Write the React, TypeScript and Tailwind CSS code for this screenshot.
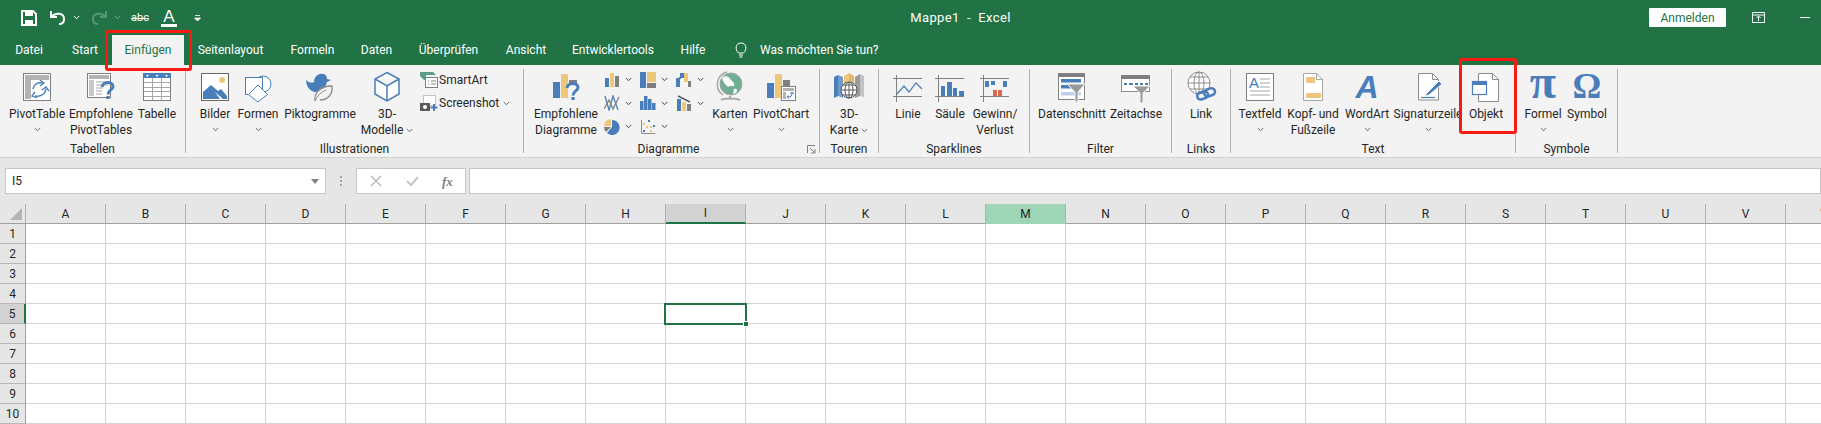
import React from 'react';

const B = '#4a7ebb', G = '#edc77c', K = '#7f7f7f', L = '#a6a6a6';

function Big({ children }: { children: React.ReactNode }) {
  return <svg width="32" height="34" viewBox="0 0 32 34" fill="none">{children}</svg>;
}
function Small({ children }: { children: React.ReactNode }) {
  return <svg width="18" height="18" viewBox="0 0 18 18" fill="none" className="shrink-0">{children}</svg>;
}
function Mini({ children }: { children: React.ReactNode }) {
  return <svg width="16" height="16" viewBox="0 0 16 16" fill="none" className="shrink-0">{children}</svg>;
}
function Chev({ color = '#666' }: { color?: string }) {
  return <svg width="7" height="5" viewBox="0 0 7 5" className="inline-block shrink-0"><path d="M.8 1 3.5 3.7 6.2 1" stroke={color} fill="none" /></svg>;
}
const Q = ({ x = 0, y = 0 }: { x?: number; y?: number }) => (
  <g transform={`translate(${x} ${y})`}>
    <path d="M0 5C.5-.8 11-.8 11 4.5c0 3.5-5 3.5-5 8" stroke={B} strokeWidth="3" />
    <rect x="4.4" y="14" width="3.2" height="3" fill={B} />
  </g>
);

const IPivot = () => <Big>
  <rect x="2.5" y="3.5" width="27" height="27" fill="#fff" stroke={K} />
  <path d="M4 5h24v5H10v19H4z" fill="#b3b3b3" />
  <path d="M14 26c6 1 10-2 11-7M22 13c-5-1-9 1-10 6" stroke={B} strokeWidth="1.5" />
  <path d="M21 20l4-3 3 4M14 22l-3 4 5 2M19 10l4 3-4 3" stroke={B} strokeWidth="1.3" />
</Big>;
const IEmpf = () => <Big>
  <rect x="2.5" y="3.5" width="23" height="24" fill="#fff" stroke={K} />
  <path d="M4 5h20v4H4z" fill="#b3b3b3" /><path d="M4 10h5v16H4z" fill="#c8c8c8" />
  <path d="M11 12h12M11 15h12M11 18h7M11 21h6M11 24h6" stroke={L} />
  <Q x={17} y={12} />
</Big>;
const ITable = () => <Big>
  <rect x="2.5" y="3.5" width="27" height="27" fill="#fff" stroke={K} />
  <rect x="2" y="3" width="28" height="5" fill={B} />
  <path d="M5 5h3l-1.5 2zM14.5 5h3L16 7zM24 5h3l-1.5 2z" fill="#fff" />
  <path d="M3 12.500h26M3 17.500h26M3 21.500h26M3 26.500h26M11.500 8v22M20.500 8v22" stroke={L} />
</Big>;
const IBilder = () => <Big>
  <rect x="2.500" y="3.500" width="27" height="27" fill="#fff" stroke="#666" />
  <circle cx="23" cy="10" r="3" fill={G} />
  <path d="M4 29v-7l8-7 7 6 3-2 6 7v3h-4l-8-7 5 7z" fill={B} />
</Big>;
const IFormen = () => <Big>
  <circle cx="21" cy="14" r="8" fill="#fff" stroke={B} />
  <rect x="3.500" y="7.500" width="17" height="17" fill="#fff" stroke={B} />
  <path d="M16 15l9.500 9.500L16 32l-9.500-7.500z" fill="#fff" stroke={B} />
</Big>;
const IPikto = () => <Big>
  <path d="M2 10c3 3 6 3 8 2 0-5 4-9 9-8 3 0 4 3 4 5l4 1-4 2c-1 5-5 10-11 10C6 22 2 16 2 10z" fill={B} />
  <path d="M11 31c-1-7 4-15 17-15 1 8-4 14-12 14" fill="#f3f3f3" stroke="#8c8c8c" strokeWidth="1.300" />
  <path d="M11 31c2-5 6-9 11-11" stroke="#8c8c8c" />
</Big>;
const ICube = () => <Big>
  <path d="M16 2.500l12 6.500v15l-12 7-12-7V9zM4 9l12 7 12-7M16 16v15" stroke={B} strokeWidth="1.500" fill="#fff" />
</Big>;
const IEmpDia = () => <Big>
  <rect x="3" y="12" width="7" height="16" fill={B} />
  <rect x="11" y="4" width="7" height="24" fill={G} />
  <rect x="19" y="10" width="8" height="3" fill={K} />
  <Q x={17} y={13} />
</Big>;
const IGlobe = () => <Big>
  <path d="M13 2c-11 3-13 17-4 23" stroke={L} strokeWidth="1.500" />
  <circle cx="17" cy="14" r="11" fill="#6fae93" stroke={L} />
  <path d="M8 8c3-3 7-2 8 1 3 3 5 4 4 7-2 1-4-2-5 1-3-1-6-5-7-9zM20 19c3-1 4 1 2 4l-3 1z" fill="#fff" />
  <path d="M16 26v3M7 30c3-2 15-2 19 0" stroke={L} strokeWidth="2" />
</Big>;
const IPChart = () => <Big>
  <rect x="2" y="13" width="7" height="15" fill={B} />
  <rect x="10" y="4" width="7" height="24" fill={G} />
  <rect x="18" y="10" width="7" height="18" fill={K} />
  <rect x="16.500" y="16.500" width="14" height="14" fill="#fff" stroke="#808080" />
  <path d="M18 18h11v3H18zM18 22h3v7h-3z" fill="#b3b3b3" />
  <path d="M23 27c3 0 4-1 4-4" stroke={B} /><path d="M25 24l2-2 2 2M24 25.500l-2 1.500 2 1.500" stroke={B} />
</Big>;
const IMap3D = () => <Big>
  <path d="M1 7l4-2v21l-4 2z" fill={B} /><path d="M5 5l5 2v21l-5-2z" fill="#6f9bcb" />
  <path d="M11 6l5-3v8l-5 3z" fill={G} /><path d="M16 3l5 3v8l-5-3z" fill="#e3b766" />
  <path d="M22 7l5-3v22l-5 2z" fill="#9a9a9a" /><path d="M27 4l4 2v21l-4-1z" fill="#c2c2c2" />
  <circle cx="16" cy="20" r="8" fill="#fff" stroke="#595959" />
  <path d="M8 20h16M16 12v16M10 15h12M10 25h12" stroke="#595959" /><ellipse cx="16" cy="20" rx="4" ry="8" stroke="#595959" />
</Big>;
const SparkFrame = () => <path d="M1 8.500h29M1 26.500h29M4.500 5v27" stroke={K} />;
const ILinie = () => <Big><SparkFrame /><path d="M5 24l7-8 5 6 7-9 6 6" stroke={B} strokeWidth="1.200" /></Big>;
const ISaeule = () => <Big><SparkFrame /><path d="M7 16h4v10H7zM13 12h5v14h-5zM19 18h4v8h-4zM25 21h5v5h-5z" fill={B} /></Big>;
const IGewinn = () => <Big>
  <SparkFrame /><path d="M6 11h4v6H6zM12 11h4v4h-4zM24 11h4v6h-4z" fill={B} /><path d="M14 20h4v6h-4zM19 20h4v6h-4z" fill="#d9694f" />
</Big>;
const ISlicer = () => <Big>
  <rect x="2.500" y="3.500" width="26" height="26" fill="#fff" stroke="#808080" />
  <rect x="3" y="4" width="25" height="3" fill="#7f7f7f" />
  <rect x="5" y="9" width="20" height="3.500" fill={B} /><rect x="5" y="15" width="20" height="3.500" fill={B} /><rect x="5" y="22" width="20" height="3.500" fill="#bdd0e8" />
  <path d="M11 14h18l-7 8v10h-3V22z" fill="#9a9a9a" stroke="#f3f3f3" />
</Big>;
const ITimeline = () => <Big>
  <rect x="1.500" y="5.500" width="28" height="16" fill="#fff" stroke="#8c8c8c" />
  <rect x="1" y="5" width="29" height="4" fill="#7f7f7f" />
  <path d="M4 13h3v2H4zM9 13h4v2H9zM15 13h3v2h-3zM20 13h3v2h-3zM25 13h3v2h-3z" fill={B} />
  <path d="M13 16h17l-7 7v10h-3V23z" fill="#9a9a9a" stroke="#f3f3f3" />
</Big>;
const ILink = () => <Big>
  <circle cx="14" cy="13" r="11" fill="#fff" stroke="#8c8c8c" />
  <ellipse cx="14" cy="13" rx="5" ry="11" stroke="#8c8c8c" /><path d="M3 13h22M5 7h18M5 19h18M14 2v22" stroke="#8c8c8c" />
  <rect x="12" y="22" width="11" height="7" rx="3.500" transform="rotate(-18 17 25)" stroke={B} strokeWidth="2.500" />
  <rect x="19" y="19" width="11" height="7" rx="3.500" transform="rotate(-18 24 22)" stroke={B} strokeWidth="2.500" />
</Big>;
const ITextfeld = () => <Big>
  <rect x="2.500" y="3.500" width="27" height="27" fill="#fff" stroke="#808080" />
  <text x="5" y="18" fill={B} fontSize="15" fontFamily="'Liberation Sans',sans-serif">A</text>
  <path d="M16 9h10M16 13h10M16 17h10M6 21h20M6 25h20" stroke={L} />
</Big>;
const IKopf = () => <Big>
  <path d="M6.500 3.500h13l6 6v21h-19z" fill="#fff" stroke="#a6a6a6" /><path d="M19.500 3.500v6h6" stroke="#a6a6a6" />
  <rect x="9" y="7" width="9" height="6" fill={G} /><rect x="9" y="23" width="15" height="5" fill={G} />
</Big>;
const IWordArt = () => <svg width="32" height="34" viewBox="0 0 32 34" className="overflow-visible">
  <text x="16" y="28" textAnchor="middle" fill={B} fontSize="32" fontWeight="700" fontStyle="italic" fontFamily="'Liberation Sans',sans-serif">A</text>
</svg>;
const ISign = () => <Big>
  <path d="M6.500 3.500h14l6 6v20.500h-20z" fill="#fff" stroke="#8c8c8c" /><path d="M20.500 3.500v6h6" stroke="#8c8c8c" />
  <path d="M9 27.500h14" stroke={B} strokeWidth="1.200" /><path d="M14 24l13-13 3 3-13 11-4 1z" fill={B} stroke="#f3f3f3" />
</Big>;
const IObjekt = () => <Big>
  <path d="M8.500 3.500h14l6 6v22h-20z" fill="#fff" stroke="#8c8c8c" /><path d="M22.500 3.500v6h6" stroke="#8c8c8c" />
  <rect x="2.500" y="11.500" width="14" height="13" fill="#fff" stroke={B} strokeWidth="1.200" /><rect x="2" y="11" width="15" height="4" fill={B} />
</Big>;
const Glyph = ({ c, s }: { c: string; s: number }) => <svg width="32" height="34" viewBox="0 0 32 34" className="overflow-visible">
  <text x="16" y="28" textAnchor="middle" fill={B} fontSize={s} fontWeight="700" fontFamily="'Liberation Serif',serif">{c}</text>
</svg>;

type Tool = { w: number; lines: string[]; chev?: 'below' | 'inline'; icon: React.ReactNode };

function ToolBtn({ t }: { t: Tool }) {
  return (
    <div className="flex h-[72px] shrink-0 flex-col items-center" style={{ width: t.w }}>
      <div className="h-[37px] pt-[1px]">{t.icon}</div>
      {t.lines.map((l, i) => (
        <div key={i} className="flex h-[16px] items-center gap-[3px] whitespace-nowrap leading-[16px]">
          {l}{t.chev === 'inline' && i === t.lines.length - 1 && <Chev />}
        </div>
      ))}
      {t.chev === 'below' && <div className="flex h-[14px] items-center"><Chev /></div>}
    </div>
  );
}

function Group({ w, pl, label, labelMl, children }: { w: number; pl: number; label: string; labelMl?: number; children: React.ReactNode }) {
  return (
    <div className="relative flex h-[84px] shrink-0 flex-col border-r border-[#b0b0b0]" style={{ width: w }}>
      <div className="flex h-[72px]" style={{ paddingLeft: pl }}>{children}</div>
      <div className="h-[12px] text-center leading-[16px]" style={{ marginLeft: labelMl ?? 0 }}>{label}</div>
    </div>
  );
}

const miniGrid: React.ReactNode[] = [
  <Mini><rect x="1" y="6" width="4" height="9" fill={B} /><rect x="6" y="1" width="4" height="14" fill={G} /><rect x="11" y="4" width="4" height="11" fill={K} /></Mini>,
  <Mini><rect x="0" y="0" width="6" height="16" fill={B} /><rect x="7" y="0" width="9" height="10" fill={G} /><rect x="7" y="11" width="9" height="5" fill={K} /></Mini>,
  <Mini><path d="M0 6h4v9H0zM4 1h4v5H4zM3 5h2v2H3z" fill={B} /><rect x="8" y="1" width="4" height="9" fill={G} /><rect x="12" y="9" width="3" height="6" fill={K} /></Mini>,
  <Mini><path d="M1 1l4 14 4-14 5 14" stroke={B} strokeWidth="1.300" /><path d="M0 14l5-9 4 9 6-12" stroke={K} strokeWidth="1.300" /></Mini>,
  <Mini><rect x="0" y="6" width="3.500" height="9" fill={B} /><rect x="4" y="1" width="3.500" height="14" fill={B} /><rect x="8" y="4" width="3.500" height="11" fill={B} /><rect x="12" y="8" width="3.500" height="7" fill={B} /></Mini>,
  <Mini><rect x="1" y="4" width="4" height="12" fill={B} /><rect x="6" y="7" width="4" height="9" fill={G} /><rect x="11" y="9" width="4" height="7" fill={K} /><path d="M2 1l6 3 6 3" stroke="#595959" strokeWidth="1.500" /></Mini>,
  <Mini><path d="M8 8V1a7.500 7.500 0 1 1-5 13z" fill={B} /><path d="M7 7V0a7 7 0 0 0-7 7z" fill={G} /><path d="M7 8H0a7 7 0 0 0 2 5z" fill={K} /></Mini>,
  <Mini><path d="M1.500 1v13.500H15" stroke="#8c8c8c" /><rect x="3" y="4" width="2" height="2" fill={G} /><rect x="8" y="1" width="2" height="2" fill={B} /><rect x="6" y="7" width="2" height="2" fill={G} /><rect x="3" y="11" width="2" height="2" fill={B} /><rect x="10" y="7" width="2" height="2" fill={G} /><rect x="13" y="6" width="2" height="2" fill={B} /><rect x="10" y="11" width="2" height="2" fill={G} /></Mini>,
];

function Ribbon() {
  return (
    <div className="flex h-[93px] border-b border-[#d2d2d2] bg-[#f3f3f3] pt-[4px] text-[12px] text-[#262626]">
      <Group w={186} pl={5} label="Tabellen">
        <ToolBtn t={{ w: 64, lines: ['PivotTable'], chev: 'below', icon: <IPivot /> }} />
        <ToolBtn t={{ w: 64, lines: ['Empfohlene', 'PivotTables'], icon: <IEmpf /> }} />
        <ToolBtn t={{ w: 48, lines: ['Tabelle'], icon: <ITable /> }} />
      </Group>
      <Group w={338} pl={8} label="Illustrationen">
        <ToolBtn t={{ w: 42, lines: ['Bilder'], chev: 'below', icon: <IBilder /> }} />
        <ToolBtn t={{ w: 44, lines: ['Formen'], chev: 'below', icon: <IFormen /> }} />
        <ToolBtn t={{ w: 80, lines: ['Piktogramme'], icon: <IPikto /> }} />
        <ToolBtn t={{ w: 54, lines: ['3D-', 'Modelle'], chev: 'inline', icon: <ICube /> }} />
        <div className="ml-[6px] flex flex-col gap-[3px] pt-[1px]">
          <div className="flex h-[20px] items-center gap-[1px]">
            <Small><path d="M0 1h13l3 3H6v5H4L0 5z" fill="#5d9d83" /><rect x="5.500" y="6.500" width="12" height="10" fill="#fff" stroke="#7f7f7f" /><path d="M8 10h1M11 10h5M8 13h1M11 13h5" stroke="#7f7f7f" /></Small>
            SmartArt
          </div>
          <div className="flex h-[20px] items-center gap-[1px]">
            <Small><rect x="3.500" y="1.500" width="12" height="10" fill="#fff" stroke="#8c8c8c" strokeDasharray="1 1" /><rect x="0" y="9" width="10" height="8" fill="#595959" /><circle cx="5" cy="13" r="2" fill="#fff" /><path d="M14 10v7M10.500 13.500h7" stroke={B} strokeWidth="2" /></Small>
            Screenshot<span className="ml-[3px]"><Chev /></span>
          </div>
        </div>
      </Group>
      <Group w={296} pl={10} label="Diagramme" labelMl={-6}>
        <ToolBtn t={{ w: 64, lines: ['Empfohlene', 'Diagramme'], icon: <IEmpDia /> }} />
        <div className="grid h-[68px] w-[108px] grid-cols-3 grid-rows-3 gap-y-[4px] pt-[1px]">
          {miniGrid.map((g, i) => (
            <div key={i} className="flex h-[19px] items-center pl-[6px]">
              {g}<span className="ml-[5px] flex"><Chev color="#444" /></span>
            </div>
          ))}
        </div>
        <ToolBtn t={{ w: 48, lines: ['Karten'], chev: 'below', icon: <IGlobe /> }} />
        <ToolBtn t={{ w: 54, lines: ['PivotChart'], chev: 'below', icon: <IPChart /> }} />
        <svg className="absolute top-[76px] left-[283px]" width="9" height="9" viewBox="0 0 9 9"><path d="M.5 8V.5H8M3 3l4.500 4.500M8 4v4H4" stroke="#7f7f7f" fill="none" /></svg>
      </Group>
      <Group w={59} pl={0} label="Touren">
        <ToolBtn t={{ w: 58, lines: ['3D-', 'Karte'], chev: 'inline', icon: <IMap3D /> }} />
      </Group>
      <Group w={151} pl={9} label="Sparklines">
        <ToolBtn t={{ w: 40, lines: ['Linie'], icon: <ILinie /> }} />
        <ToolBtn t={{ w: 44, lines: ['Säule'], icon: <ISaeule /> }} />
        <ToolBtn t={{ w: 46, lines: ['Gewinn/', 'Verlust'], icon: <IGewinn /> }} />
      </Group>
      <Group w={142} pl={8} label="Filter">
        <ToolBtn t={{ w: 68, lines: ['Datenschnitt'], icon: <ISlicer /> }} />
        <ToolBtn t={{ w: 60, lines: ['Zeitachse'], icon: <ITimeline /> }} />
      </Group>
      <Group w={59} pl={0} label="Links">
        <ToolBtn t={{ w: 58, lines: ['Link'], icon: <ILink /> }} />
      </Group>
      <Group w={285} pl={5} label="Text">
        <ToolBtn t={{ w: 48, lines: ['Textfeld'], chev: 'below', icon: <ITextfeld /> }} />
        <ToolBtn t={{ w: 58, lines: ['Kopf- und', 'Fußzeile'], icon: <IKopf /> }} />
        <ToolBtn t={{ w: 50, lines: ['WordArt'], chev: 'below', icon: <IWordArt /> }} />
        <ToolBtn t={{ w: 72, lines: ['Signaturzeile'], chev: 'below', icon: <ISign /> }} />
        <ToolBtn t={{ w: 44, lines: ['Objekt'], icon: <IObjekt /> }} />
      </Group>
      <Group w={102} pl={6} label="Symbole">
        <ToolBtn t={{ w: 42, lines: ['Formel'], chev: 'below', icon: <Glyph c="π" s={48} /> }} />
        <ToolBtn t={{ w: 46, lines: ['Symbol'], icon: <Glyph c="Ω" s={36} /> }} />
      </Group>
    </div>
  );
}

const tabs: [string, number][] = [['Datei', 58], ['Start', 54], ['Einfügen', 72], ['Seitenlayout', 93], ['Formeln', 71], ['Daten', 57], ['Überprüfen', 87], ['Ansicht', 68], ['Entwicklertools', 106], ['Hilfe', 54]];
const cols = 'ABCDEFGHIJKLMNOPQRSTUVW'.split('');

function Sheet() {
  return (
    <div className="relative">
      <div className="flex h-[20px] border-b border-[#9f9f9f] bg-[#e6e6e6]">
        <div className="relative h-[19px] w-[26px] shrink-0 border-r border-[#b0b0b0]">
          <svg className="absolute top-[4px] left-[10px]" width="12" height="12"><path d="M12 0v12H0z" fill="#b4b4b4" /></svg>
        </div>
        {cols.map((c) => (
          <div key={c} className={`flex h-[20px] w-[80px] shrink-0 items-center justify-center border-r border-[#b0b0b0] ${c === 'I' ? 'border-b-2 border-b-[#217346] bg-[#d2d2d2]' : ''} ${c === 'M' ? 'bg-[#9fd5b7]' : ''}`}>{c}</div>
        ))}
      </div>
      {[1, 2, 3, 4, 5, 6, 7, 8, 9, 10].map((r) => (
        <div key={r} className="flex h-[20px]">
          <div className={`flex h-[20px] w-[26px] shrink-0 items-center justify-center border-b border-[#b8b8b8] ${r === 5 ? 'border-r-2 border-r-[#217346] bg-[#d2d2d2]' : 'border-r border-r-[#9f9f9f] bg-[#e6e6e6]'}`}>{r}</div>
          {cols.map((c) => (
            <div key={c} className="h-[20px] w-[80px] shrink-0 border-r border-b border-[#d4d4d4] bg-white" />
          ))}
        </div>
      ))}
      <div className="absolute top-[99px] left-[664px] h-[22px] w-[83px] border-2 border-[#217346]" />
      <div className="absolute top-[117px] left-[743px] h-[6px] w-[6px] border border-white bg-[#217346]" />
    </div>
  );
}

export default function App() {
  return (
    <div className="relative h-[424px] w-[1821px] overflow-hidden bg-white font-['Roboto',sans-serif] text-[12px] text-[#262626]">
      <div className="h-[65px] bg-[#217346] text-white">
        <div className="flex h-[35px] items-center">
          <div className="flex h-[35px] w-[800px] items-center pl-[21px]">
            <svg width="16" height="16" viewBox="0 0 16 16"><path d="M1 1h11l3 3v11H1z" fill="none" stroke="#fff" strokeWidth="2" /><rect x="4" y="1" width="8" height="5" fill="#fff" /><rect x="4" y="10" width="8" height="5" fill="#fff" /></svg>
            <svg className="ml-[13px]" width="16" height="16" viewBox="0 0 16 16"><path d="M1 1v6h6M1.500 6.500C6 2 14 3 14 9c0 3-2 5-5 5" stroke="#fff" strokeWidth="2" fill="none" /></svg>
            <span className="ml-[7px] flex"><Chev color="#fff" /></span>
            <svg className="ml-[11px] opacity-40" width="16" height="16" viewBox="0 0 16 16"><path d="M15 1v6H9M14.500 6.500C10 2 2 3 2 9c0 3 2 5 5 5" stroke="#a8d0b8" strokeWidth="2" fill="none" /></svg>
            <span className="ml-[7px] flex opacity-40"><Chev color="#fff" /></span>
            <span className="relative ml-[10px] text-[11px] leading-none">abc<span className="absolute top-[6px] left-0 h-px w-full bg-white" /></span>
            <span className="ml-[12px] flex h-[18px] w-[16px] flex-col items-center justify-end border-b-[3px] border-white font-['Liberation_Sans',sans-serif] text-[17px] leading-[14px]">A</span>
            <svg className="ml-[17px]" width="7" height="8" viewBox="0 0 7 8"><path d="M1 1.500h5M.5 4h6L3.500 7z" stroke="#fff" strokeWidth=".8" fill="#fff" /></svg>
          </div>
          <div className="w-[321px] text-center text-[13px] tracking-[0.4px] whitespace-pre">Mappe1  -  Excel</div>
          <div className="flex-1" />
          <div className="flex h-[19px] w-[77px] items-center justify-center rounded-[1px] bg-white text-[#217346]">Anmelden</div>
          <svg className="ml-[26px]" width="13" height="11" viewBox="0 0 13 11"><path d="M.5.500h12v10H.5zM.5 3h12M6.500 9V4.500M4.500 6l2-2 2 2" stroke="#fff" fill="none" /></svg>
          <div className="ml-[35px] h-px w-[10px] bg-white" />
          <div className="w-[11px]" />
        </div>
        <div className="flex h-[30px] items-center">
          {tabs.map(([t, w]) => (
            <div key={t} className={`flex h-[30px] shrink-0 items-center justify-center ${t === 'Einfügen' ? 'bg-[#f3f3f3] text-[#217346]' : ''}`} style={{ width: w }}>{t}</div>
          ))}
          <svg className="ml-[14px]" width="14" height="16" viewBox="0 0 14 16"><path d="M4.500 11C1 8 1 1 7 1s6 7 2.500 10zM5 13h4M5.500 15h3" stroke="#fff" fill="none" /></svg>
          <span className="ml-[12px]">Was möchten Sie tun?</span>
        </div>
      </div>
      <Ribbon />
      <div className="h-[46px] bg-[#e6e6e6] pt-[10px]">
        <div className="flex h-[26px] pl-[5px]">
          <div className="flex h-[26px] w-[321px] shrink-0 items-center justify-between border border-[#c6c6c6] bg-white pr-[6px] pl-[6px]">
            I5
            <svg width="8" height="5" viewBox="0 0 8 5"><path d="M0 0h8L4 5z" fill="#7f7f7f" /></svg>
          </div>
          <div className="flex w-[30px] shrink-0 flex-col items-center justify-center gap-[2px]">
            <i className="h-[2px] w-[2px] bg-[#a6a6a6]" /><i className="h-[2px] w-[2px] bg-[#a6a6a6]" /><i className="h-[2px] w-[2px] bg-[#a6a6a6]" />
          </div>
          <div className="flex h-[26px] w-[110px] shrink-0 items-center border border-[#c6c6c6] bg-white">
            <svg className="ml-[13px]" width="12" height="12" viewBox="0 0 12 12"><path d="M1 1l10 10M11 1 1 11" stroke="#bdbdbd" strokeWidth="1.500" /></svg>
            <svg className="ml-[24px]" width="13" height="12" viewBox="0 0 13 12"><path d="M1 6l4 4 7-8" stroke="#c6c6c6" strokeWidth="2" fill="none" /></svg>
            <span className="ml-[23px] font-['Liberation_Serif',serif] text-[13px] leading-none font-bold text-[#7f7f7f] italic">fx</span>
          </div>
          <div className="ml-[3px] h-[26px] flex-1 border border-[#c6c6c6] bg-white" />
        </div>
      </div>
      <Sheet />
      <div className="absolute top-[30px] left-[105px] h-[41px] w-[87px] rounded-[3px] border-[3px] border-[#fb1a13]" />
      <div className="absolute top-[58px] left-[1459px] h-[76px] w-[58px] rounded-[3px] border-[3px] border-[#fb1a13]" />
    </div>
  );
}
